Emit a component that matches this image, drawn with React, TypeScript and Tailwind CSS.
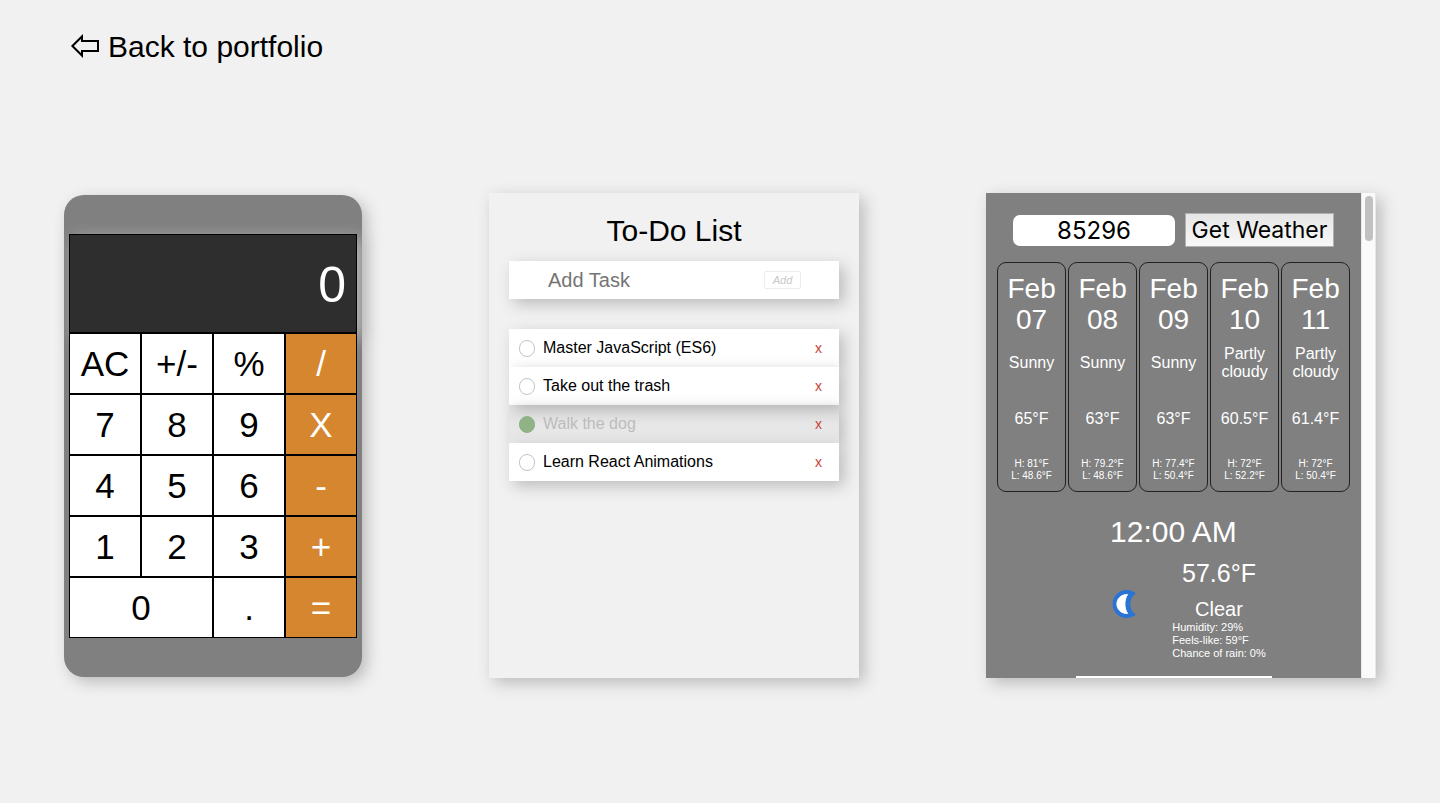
import { useState } from "react";

const calculatorKeys = [
  ["AC", "+/-", "%", "/"],
  ["7", "8", "9", "X"],
  ["4", "5", "6", "-"],
  ["1", "2", "3", "+"],
  ["0", ".", "="],
].flat();

const operators = ["/", "X", "-", "+", "="];

function Calculator() {
  return (
    <section
      aria-label="Calculator"
      className="rounded-[20px] bg-[#808080] px-[5px] py-[39px] shadow-[5px_5px_15px_#bbb]"
    >
      <output className="flex h-[99px] items-center justify-end border border-black bg-[#2e2e2e] px-[10px] pt-1 text-[50px] text-white shadow-[5px_5px_15px_#bbb]">
        0
      </output>
      <div className="relative grid grid-cols-[repeat(4,72px)] auto-rows-[61px]">
        {calculatorKeys.map((key) => (
          <button
            key={key}
            type="button"
            className={`border border-black text-[35px] leading-none ${key === "0" ? "col-span-2" : ""} ${
              operators.includes(key) ? "bg-[#d5862f] text-white" : "bg-white text-black"
            }`}
          >
            {key}
          </button>
        ))}
      </div>
    </section>
  );
}

const initialTasks = [
  { text: "Master JavaScript (ES6)", done: false },
  { text: "Take out the trash", done: false },
  { text: "Walk the dog", done: true },
  { text: "Learn React Animations", done: false },
];

function TodoList() {
  const [tasks, setTasks] = useState(initialTasks);
  const toggle = (text: string) =>
    setTasks(tasks.map((t) => (t.text === text ? { ...t, done: !t.done } : t)));
  const remove = (text: string) => setTasks(tasks.filter((t) => t.text !== text));

  return (
    <section className="h-[485px] w-[370px] p-5 shadow-[5px_5px_15px_#bbb]">
      <h1 className="text-center text-[30px] leading-9">To-Do List</h1>
      <form className="mt-3 flex h-[38px] items-center bg-white pr-[38px] pl-[39px] shadow-[5px_5px_15px_#bbb]">
        <input
          type="text"
          aria-label="Add Task"
          placeholder="Add Task"
          className="min-w-0 flex-1 bg-transparent text-[20px] outline-none placeholder:text-[#757575]"
        />
        <button
          type="button"
          className="h-[18px] w-[37px] rounded-[2px] border border-[#ececec] text-[11px] leading-none text-[#c8c8c8] italic"
        >
          Add
        </button>
      </form>
      <ul className="mt-[30px]">
        {tasks.map((task) => (
          <li
            key={task.text}
            className={`flex h-[38px] items-center pr-[17px] pl-[10px] shadow-[5px_5px_15px_#bbb] ${
              task.done ? "bg-black/4" : "bg-white"
            }`}
          >
            <label className="flex flex-1 items-center gap-2 text-[16px]">
              <input
                type="checkbox"
                checked={task.done}
                onChange={() => toggle(task.text)}
                className="h-[17px] w-4 appearance-none rounded-full border border-[#c4c4c4] bg-white checked:border-[#8fb286] checked:bg-[#8fb286]"
              />
              <span className={task.done ? "text-[#bcbcbc]" : "text-black"}>{task.text}</span>
            </label>
            <button
              type="button"
              aria-label={`Delete ${task.text}`}
              onClick={() => remove(task.text)}
              className="text-[14px] leading-4 text-[#c8433a]"
            >
              x
            </button>
          </li>
        ))}
      </ul>
    </section>
  );
}

const forecast = [
  { day: "07", sky: "Sunny", temp: "65", high: "81", low: "48.6" },
  { day: "08", sky: "Sunny", temp: "63", high: "79.2", low: "48.6" },
  { day: "09", sky: "Sunny", temp: "63", high: "77.4", low: "50.4" },
  { day: "10", sky: "Partly cloudy", temp: "60.5", high: "72", low: "52.2" },
  { day: "11", sky: "Partly cloudy", temp: "61.4", high: "72", low: "50.4" },
];

function Moon() {
  return (
    <svg width="24" height="28" viewBox="0 0 24 28" aria-hidden="true">
      <path
        d="M23 3.4C20.6 1.4 17.6 .6 14.6 .6A13.4 13.4 0 0 0 14.6 27.4C17.6 27.4 20.6 26.6 23 24.8C16 20.5 16 7.5 23 3.4Z"
        fill="#2b74d4"
        stroke="#2b74d4"
        strokeWidth="1.2"
        strokeLinejoin="round"
      />
      <path d="M15.6 4.6C8.9 4.2 4.9 9 4.9 14S8.9 23.8 15.6 23.4C12 18.5 12 9.5 15.6 4.6Z" fill="#fff" stroke="#fff" strokeWidth="1" strokeLinejoin="round" />
    </svg>
  );
}

function Weather() {
  const [zip, setZip] = useState("85296");
  return (
    <section aria-label="Weather" className="flex h-[485px] w-[390px] shadow-[5px_5px_15px_#bbb]">
      <div className="flex flex-1 flex-col items-center overflow-hidden bg-[#808080] pt-5 text-white">
        <form className="flex items-center gap-[10px]">
          <input
            type="text"
            aria-label="Zip code"
            value={zip}
            onChange={(e) => setZip(e.target.value)}
            className="h-[31px] w-[162px] rounded-[7px] bg-white text-center font-['Inter',sans-serif] text-[24px] leading-none text-black"
          />
          <button
            type="button"
            className="h-[34px] w-[149px] border border-[#b0b0b0] bg-linear-to-b from-[#e6e6e6] to-[#f8f8f8] font-['Inter',sans-serif] text-[23px] leading-none whitespace-nowrap text-black"
          >
            Get Weather
          </button>
        </form>
        <div className="mt-[15px] grid w-full grid-cols-5 gap-[2px] px-[11px] text-center">
          {forecast.map((f) => (
            <article key={f.day} className="flex h-[230px] flex-col items-center rounded-[9px] border border-[#222] pt-[10px]">
              <h2 className="w-12 text-[28px] leading-[31px]">Feb {f.day}</h2>
              <p className="mt-[10px] flex h-9 w-12 items-center justify-center text-[16px] leading-[18px]">{f.sky}</p>
              <p className="mt-[29px] text-[16px] leading-[18px]">{f.temp}°F</p>
              <p className="mt-[30px] text-[10px] leading-[12px]">
                H: {f.high}°F
                <br />
                L: {f.low}°F
              </p>
            </article>
          ))}
        </div>
        <article className="mt-[22px] flex w-[196px] flex-col items-center border-b-2 border-white pb-4">
          <h2 className="text-[30px] leading-[36px]">12:00 AM</h2>
          <div className="mt-2 flex items-start gap-9 pl-[31px]">
            <div className="pt-8">
              <Moon />
            </div>
            <div>
              <p className="text-center text-[25px] leading-[30px]">57.6°F</p>
              <p className="mt-[9px] text-center text-[20px] leading-[24px]">Clear</p>
              <p className="text-[11px] leading-[13px] whitespace-nowrap">
                Humidity: 29%
                <br />
                Feels-like: 59°F
                <br />
                Chance of rain: 0%
              </p>
            </div>
          </div>
        </article>
      </div>
      <div className="flex w-[15px] flex-col items-center border-x border-[#e8e8e8] bg-[#fafafa] pt-[3px]">
        <div className="h-[45px] w-2 rounded-full bg-[#c1c1c1]" />
      </div>
    </section>
  );
}

export default function App() {
  return (
    <div className="min-h-screen bg-[#f1f1f1] font-['Liberation_Sans',Arial,sans-serif] text-black">
      <header className="flex px-[70px] pt-[29px]">
        <a href="#portfolio" className="flex items-center gap-2 text-[30px] leading-9">
          <svg width="30" height="26" viewBox="0 0 30 26" fill="none" stroke="currentColor" strokeWidth="2" aria-hidden="true">
            <path d="M2.4 12L12 2.5V7H28V17H12V21.5Z" />
          </svg>
          Back to portfolio
        </a>
      </header>
      <main className="flex flex-wrap items-center justify-between gap-8 px-16 pt-32 pb-16">
        <Calculator />
        <TodoList />
        <Weather />
      </main>
    </div>
  );
}
